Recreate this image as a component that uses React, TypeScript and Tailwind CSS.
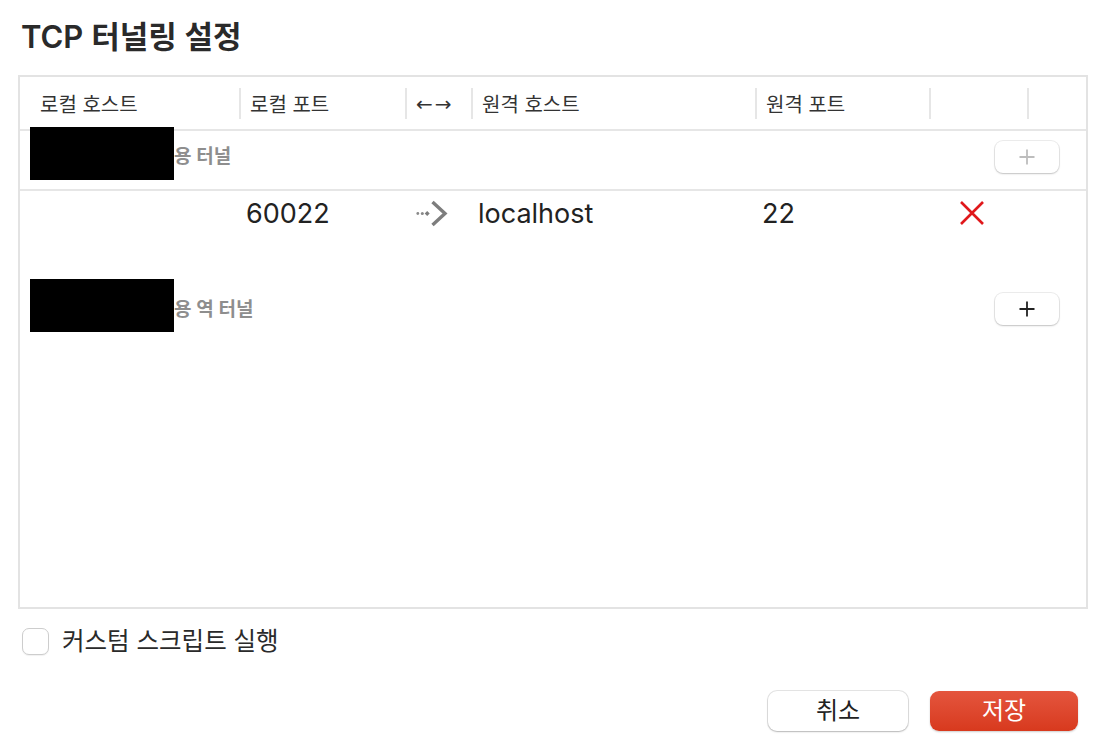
import React from "react";

const FONT = { fontFamily: '"Inter", "Noto Sans CJK KR", sans-serif' };

function Sep() {
  return <div className="h-[31px] w-[2px] bg-[#e6e6e6] shrink-0" />;
}

function PlusButton({ disabled }: { disabled?: boolean }) {
  return (
    <div className="w-[64px] h-[32px] rounded-[8px] bg-white flex items-center justify-center shadow-[0_0_0_1px_rgba(0,0,0,0.07),0_1px_2px_rgba(0,0,0,0.18)]">
      <svg width="18" height="18" viewBox="0 0 18 18">
        <path
          d="M9 1.5V16.5M1.5 9H16.5"
          stroke={disabled ? "#bdbdbd" : "#222222"}
          strokeWidth="1.8"
          fill="none"
        />
      </svg>
    </div>
  );
}

function ArrowIcon() {
  return (
    <svg width="32" height="28" viewBox="0 0 32 28">
      <circle cx="1.8" cy="13.5" r="1.4" fill="#8a8a8a" />
      <circle cx="6.3" cy="13.5" r="1.5" fill="#888" />
      <path d="M11.2 11L13.7 13.5L11.2 16L8.7 13.5Z" fill="#7d7d7d" />
      <path d="M16.5 2L29 13.5L16.5 25" stroke="#7d7d7d" strokeWidth="3.4" fill="none" />
    </svg>
  );
}

function RedX() {
  return (
    <svg width="26" height="26" viewBox="0 0 26 26">
      <path d="M2 2L24 24M24 2L2 24" stroke="#e0181b" strokeWidth="2.6" fill="none" />
    </svg>
  );
}

export default function App() {
  return (
    <div
      className="w-[1118px] h-[744px] bg-white text-[#2b2b2b] flex flex-col overflow-hidden"
      style={FONT}
    >
      <div className="pl-[21px] pt-[19px] h-[75px]">
        <div className="text-[31px] leading-[36px] font-semibold text-[#2a2a2a]">
          TCP 터널링 설정
        </div>
      </div>

      <div className="ml-[18px] w-[1070px] h-[534px] border-2 border-[#e3e3e3] flex flex-col">
        {/* header */}
        <div className="h-[54px] border-b-2 border-[#e6e6e6] grid grid-cols-[219px_166px_66px_284px_174px_98px_1fr] items-center text-[20px] leading-[26px] text-[#333]">
          <div className="pl-[20px] pt-[3px]">로컬 호스트</div>
          <div className="flex items-center gap-[9px]">
            <Sep />
            <span className="pt-[3px]">로컬 포트</span>
          </div>
          <div className="flex items-center gap-[9px]">
            <Sep />
            <div
              style={{ fontFamily: '"DejaVu Sans", sans-serif' }}
              className="flex items-center gap-[2px] text-[20px] leading-[26px] pt-[2px] text-[#333]"
            >
              <span>←</span>
              <span>→</span>
            </div>
          </div>
          <div className="flex items-center gap-[9px]">
            <Sep />
            <span className="pt-[3px]">원격 호스트</span>
          </div>
          <div className="flex items-center gap-[9px]">
            <Sep />
            <span className="pt-[3px]">원격 포트</span>
          </div>
          <div className="flex items-center">
            <Sep />
          </div>
          <div className="flex items-center">
            <Sep />
          </div>
        </div>

        {/* group 1 */}
        <div className="h-[60px] border-b-2 border-[#e6e6e6] flex items-start">
          <div className="ml-[10px] -mt-[4px] w-[144px] h-[53px] bg-black relative" />
          <div className="mt-[13px] text-[19px] leading-[26px] font-semibold text-[#8e8e8e]">
            용 터널
          </div>
          <div className="ml-auto mr-[27px] mt-[10px]">
            <PlusButton disabled />
          </div>
        </div>

        {/* data row */}
        <div className="h-[88px] grid grid-cols-[219px_166px_66px_284px_174px_98px_1fr] items-start text-[27px] leading-[34px] text-[#222]">
          <div />
          <div className="pl-[7px] pt-[6px]">60022</div>
          <div className="pl-[11px] pt-[9px]">
            <ArrowIcon />
          </div>
          <div className="pl-[7px] pt-[6px]">localhost</div>
          <div className="pl-[7px] pt-[6px]">22</div>
          <div className="pl-[30px] pt-[9px]">
            <RedX />
          </div>
          <div />
        </div>

        {/* group 2 */}
        <div className="h-[60px] flex items-start">
          <div className="ml-[10px] w-[144px] h-[53px] bg-black" />
          <div className="mt-[18px] text-[19px] leading-[26px] font-semibold text-[#8e8e8e]">
            용 역 터널
          </div>
          <div className="ml-auto mr-[27px] mt-[14px]">
            <PlusButton />
          </div>
        </div>
      </div>

      {/* checkbox */}
      <div className="mt-[17px] ml-[22px] flex items-center gap-[13px]">
        <div className="w-[27px] h-[27px] rounded-[7px] border border-[#cdcdcd] bg-white shadow-[0_1px_1px_rgba(0,0,0,0.06)]" />
        <span className="text-[24.5px] leading-[30px] text-[#2a2a2a]">커스텀 스크립트 실행</span>
      </div>

      {/* buttons */}
      <div className="mt-[35px] mr-[40px] flex justify-end gap-[22px]">
        <div className="w-[140px] h-[40px] rounded-[9px] bg-white flex items-center justify-center text-[24px] text-[#222] shadow-[0_0_0_1px_rgba(0,0,0,0.1),0_1px_2px_rgba(0,0,0,0.2)]">
          취소
        </div>
        <div className="w-[148px] h-[40px] rounded-[9px] bg-gradient-to-b from-[#e4553d] to-[#d8391d] flex items-center justify-center text-[24px] text-white shadow-[0_1px_2px_rgba(0,0,0,0.2)]">
          저장
        </div>
      </div>
    </div>
  );
}
